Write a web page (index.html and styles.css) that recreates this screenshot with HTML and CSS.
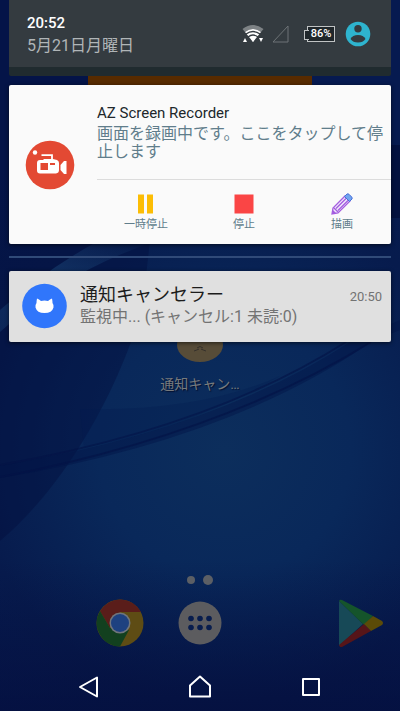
FILE: index.html
```html
<!DOCTYPE html>
<html lang="ja">
<head>
    <meta charset="UTF-8">
    <meta name="viewport" content="width=device-width, initial-scale=1.0">
    <title>通知</title>
    <link rel="stylesheet" href="styles.css">
</head>
<body>
    <div class="screen">
        <svg class="wallpaper" viewBox="0 0 400 711" preserveAspectRatio="none" aria-hidden="true">
            <defs>
                <radialGradient id="glow" gradientUnits="userSpaceOnUse" cx="225" cy="450" r="360">
                    <stop offset="0" stop-color="#0c2e5c"/>
                    <stop offset="0.35" stop-color="#09285a"/>
                    <stop offset="0.7" stop-color="#071b4d"/>
                    <stop offset="1" stop-color="#061a50"/>
                </radialGradient>
                <linearGradient id="floor" x1="0" y1="0" x2="0" y2="1">
                    <stop offset="0" stop-color="#040d3c" stop-opacity="0"/>
                    <stop offset="1" stop-color="#040d3c" stop-opacity="0.7"/>
                </linearGradient>
                <linearGradient id="streak" x1="0" y1="1" x2="1" y2="0">
                    <stop offset="0" stop-color="#1c4a7c" stop-opacity="0.35"/>
                    <stop offset="0.5" stop-color="#1c4a7c" stop-opacity="0.5"/>
                    <stop offset="1" stop-color="#1c4a7c" stop-opacity="0"/>
                </linearGradient>
            </defs>
            <rect width="400" height="711" fill="url(#glow)"/>
            <rect y="560" width="400" height="151" fill="url(#floor)"/>
            <path d="M0 0H150C160 180 150 290 131 342C105 412 60 490 0 541Z" fill="#020d3c" opacity="0.4"/>
            <path d="M0 310Q45 270 100 240H160Q70 268 0 332Z" fill="url(#streak)"/>
            <path d="M391 145H400V218H391Z" fill="#020b36" opacity="0.6"/>
            <path d="M0 466Q215 430 350 342L400 320V330L371 342Q230 440 0 478Z" fill="#031448" opacity="0.45"/>
            <path d="M0 465Q210 428 346 342M0 477Q220 435 371 342" fill="none" stroke="#031246" stroke-width="2" opacity="0.6"/>
            <path d="M80 409Q200 412 280 376Q200 424 84 448Z" fill="#041a50" opacity="0.3"/>
        </svg>

        <!-- Home screen, dimmed behind the shade -->
        <main class="home">
            <div class="widget"></div>
            <a class="app" href="#">
                <svg width="48" height="48" viewBox="0 0 48 48" aria-hidden="true">
                    <ellipse cx="24" cy="31" rx="23" ry="17" fill="#574c38"/>
                    <path d="M21 34q3-3 6 0M18 37q3-1 5-2M30 37q-3-1-5-2" fill="none" stroke="#35302b"/>
                </svg>
                <span>通知キャン…</span>
            </a>
            <div class="pages"><i class="dot"></i><i class="dot current"></i></div>
            <div class="dock">
                <a class="dock-chrome" href="#" aria-label="Chrome">
                    <svg width="48" height="48" viewBox="0 0 48 48">
                        <circle cx="24" cy="24" r="23.500" fill="#5e4c14"/>
                        <path d="M4 12A23.500 23.500 0 0 1 45 13H24L14 29Z" fill="#5a1d1a"/>
                        <path d="M4 12A23.500 23.500 0 0 0 24 47.500L33 31L14 29Z" fill="#12401f"/>
                        <circle cx="24" cy="24" r="10.500" fill="#70757c"/>
                        <circle cx="24" cy="24" r="9" fill="#1e4180"/>
                    </svg>
                </a>
                <a class="dock-apps" href="#" aria-label="アプリ">
                    <svg width="48" height="48" viewBox="0 0 48 48">
                        <circle cx="24" cy="24" r="21.500" fill="#5c5c5f"/>
                        <g fill="#081d4e">
                            <circle cx="15" cy="19.500" r="2.800"/><circle cx="24" cy="19.500" r="2.800"/><circle cx="33" cy="19.500" r="2.800"/>
                            <circle cx="15" cy="28.500" r="2.800"/><circle cx="24" cy="28.500" r="2.800"/><circle cx="33" cy="28.500" r="2.800"/>
                        </g>
                    </svg>
                </a>
                <a class="dock-play" href="#" aria-label="Play ストア">
                    <svg width="48" height="48" viewBox="0 0 48 48">
                        <path d="M3 2V47L27 25Z" fill="#174957"/>
                        <path d="M3 2Q4 0 6 1L37 17L28 26Z" fill="#15542b"/>
                        <path d="M28 25L3 46Q4 49 6 48L35 32Z" fill="#561519"/>
                        <path d="M37 17L46 22Q48 24 46 26L35 32L28 25Z" fill="#5b4b08"/>
                    </svg>
                </a>
            </div>
        </main>

        <!-- Notification shade -->
        <div class="shade">
            <header class="status">
                <div class="clock">
                    <div class="time">20:52</div>
                    <div class="date">5月21日月曜日</div>
                </div>
                <div class="status-icons">
                    <svg width="22" height="20" viewBox="0 0 22 20" aria-label="Wi-Fi">
                        <path d="M0.500 5Q11-3 21.500 5L19 8Q11 2 3 8Z" fill="#7d8285"/>
                        <path d="M3 8Q11 2 19 8L11 18Z" fill="#fff"/>
                        <path d="M4 10Q11 5 18 10M6 13Q11 9 16 13" fill="none" stroke="#343b40" stroke-width="1.300"/>
                        <path d="M1 18L3 14L5 18ZM17 14H21L19 18ZM9 14H13L11 18Z" fill="#fff"/>
                    </svg>
                    <svg width="17" height="18" viewBox="0 0 17 18" aria-label="圏外">
                        <path d="M1 17H16V1Z" fill="none" stroke="#6d7376"/>
                    </svg>
                    <div class="battery">86%</div>
                    <svg class="user" width="26" height="26" viewBox="0 0 26 26" aria-label="ユーザー">
                        <circle cx="13" cy="13" r="12.300" fill="#2eb4cf"/>
                        <circle cx="13" cy="7.700" r="3.700" fill="#343b40"/>
                        <path d="M5.500 18Q7.500 14 13 14T20.500 18Q18 21.500 13 21.500T5.500 18Z" fill="#343b40"/>
                    </svg>
                </div>
            </header>

            <section class="card recorder">
                <svg class="card-icon" width="50" height="50" viewBox="0 0 50 50" aria-hidden="true">
                    <circle cx="25" cy="25" r="24.300" fill="#e34933"/>
                    <circle cx="10" cy="12.500" r="2.200" fill="#fff"/>
                    <path d="M16.500 15.200H27V20" fill="none" stroke="#fff" stroke-width="1.800"/>
                    <path d="M15 20H18L19 19H28L32 20Q34 21 34 23V30Q34 33 31 33.500H15Q12 33.500 12 30.500V23Q12 20 15 20Z" fill="#fff"/>
                    <rect x="15.500" y="23" width="7.500" height="7" fill="#e34933"/>
                    <rect x="25" y="23" width="5" height="2" fill="#e34933"/>
                    <path d="M35.500 25L39 21H41.500V34H39L35.500 30Z" fill="#fff"/>
                </svg>
                <div class="recorder-body">
                    <h2>AZ Screen Recorder</h2>
                    <p>画面を録画中です。ここをタップして停止します</p>
                    <div class="actions">
                        <button type="button">
                            <svg width="22" height="22" viewBox="0 0 22 22"><path d="M3 1.500H9V20.500H3ZM12 1.500H18V20.500H12Z" fill="#fcbd05"/></svg>
                            一時停止
                        </button>
                        <button type="button">
                            <svg width="22" height="22" viewBox="0 0 22 22"><rect x="1.500" y="1.500" width="19" height="19" fill="#fa4545"/></svg>
                            停止
                        </button>
                        <button type="button">
                            <svg width="22" height="22" viewBox="0 0 22 22">
                                <g fill="none" stroke="#a45ddf" stroke-width="1.300">
                                    <path d="M1 21L2 15L14 3L19 8L7 20Z" fill="#f0e8fb"/>
                                    <path d="M3 15L7 19M5 15.500L15.500 5M7 17.500L17.500 7"/>
                                </g>
                                <path d="M1 21L2 17L5 20Z" fill="#a45ddf"/>
                                <path d="M13.500 3.500L16 1Q17 .5 18 1.300L20.700 4Q21.500 5 21 6L18.500 8.500Z" fill="#71a5ee" stroke="#486fd9"/>
                            </svg>
                            描画
                        </button>
                    </div>
                </div>
            </section>

            <hr class="divider">

            <section class="card canceller">
                <svg width="46" height="46" viewBox="0 0 46 46" aria-hidden="true">
                    <circle cx="23.500" cy="23" r="22.300" fill="#3076fb"/>
                    <path d="M16 15.500Q18 16 20 18Q23.500 17 27 18Q29 16 31 15.500Q31.500 18 31.500 20Q33 22 32.500 24.500Q31 30 23.500 30T14.500 24.500Q14 22 15.500 20Q15.500 18 16 15.500Z" fill="#fff"/>
                </svg>
                <div class="canceller-body">
                    <h2>通知キャンセラー</h2>
                    <p>監視中... (キャンセル:1 未読:0)</p>
                </div>
                <time>20:50</time>
            </section>
        </div>

        <nav class="navbar">
            <button type="button" aria-label="戻る">
                <svg width="24" height="24" viewBox="0 0 24 24"><path d="M20 2.500V21.500L3 12Z"/></svg>
            </button>
            <button type="button" aria-label="ホーム">
                <svg width="24" height="24" viewBox="0 0 24 24"><path d="M2 21.500V10.500L12 1.500L22 10.500V21.500Z"/></svg>
            </button>
            <button type="button" aria-label="履歴">
                <svg width="24" height="24" viewBox="0 0 24 24"><path d="M4 4H20V20H4Z"/></svg>
            </button>
        </nav>
    </div>
</body>
</html>
```

FILE: styles.css
```css
* {
    margin: 0;
    padding: 0;
    box-sizing: border-box;
}

body {
    font-family: Roboto, "Noto Sans CJK JP", sans-serif;
    background: #051246;
}

svg {
    display: block;
    flex-shrink: 0;
}

button {
    background: none;
    border: none;
    font: inherit;
    color: inherit;
    cursor: pointer;
}

a {
    color: inherit;
    text-decoration: none;
}

h2 {
    font-weight: 400;
}

/* home and shade share the first row */
.screen {
    position: relative;
    display: grid;
    grid-template: 1fr 48px / 1fr;
    min-height: 100vh;
}

.wallpaper {
    position: absolute;
    width: 100%;
    height: 100%;
}

.home,
.shade {
    grid-area: 1 / 1;
    position: relative;
    min-width: 0;
}

/* Home screen */
.home {
    display: flex;
    flex-direction: column;
    align-items: center;
    padding: 60px 0 16px;
}

.widget {
    width: 56%;
    height: 40px;
    background: #572b00;
}

.app {
    display: flex;
    flex-direction: column;
    align-items: center;
    gap: 12px;
    margin-top: 214px;
    font-size: 14px;
    line-height: 20px;
    color: #777a7c;
    text-shadow: 1px 1px 1px #031030;
}

.pages {
    display: flex;
    align-items: center;
    gap: 8px;
    margin-top: auto;
    padding-bottom: 14px;
}

.dot {
    width: 8px;
    height: 8px;
    border-radius: 50%;
    background: #5c5f65;
}

.dot.current {
    width: 10px;
    height: 10px;
}

.dock {
    display: grid;
    grid-template-columns: repeat(5, 1fr);
    justify-items: center;
    width: 100%;
}

.dock-chrome {
    grid-column: 2;
}

.dock-apps {
    grid-column: 3;
}

.dock-play {
    grid-column: 5;
}

/* Notification shade */
.shade {
    padding: 0 9px;
}

.status {
    display: flex;
    justify-content: space-between;
    height: 76px;
    padding: 12px 20px 0 18px;
    background: #343b40;
    border-bottom: 9px solid #202b2f;
    border-radius: 0 0 2px 2px;
    margin-bottom: 9px;
}

.time {
    font-size: 15px;
    font-weight: 500;
    line-height: 22px;
    color: #fff;
}

.date {
    font-size: 16px;
    line-height: 24px;
    color: #b0b5b7;
}

.status-icons {
    display: flex;
    align-items: center;
    gap: 8px;
    height: 43px;
}

.battery {
    position: relative;
    width: 28px;
    height: 16px;
    margin-left: 10px;
    border: 1px solid #c0c3c4;
    background: #20272b;
    color: #fff;
    font-size: 11px;
    font-weight: 500;
    line-height: 14px;
    text-align: center;
}

.battery::before {
    content: "";
    position: absolute;
    left: -4px;
    top: 3px;
    width: 4px;
    height: 8px;
    border: 1px solid #c0c3c4;
    border-right: none;
    background: #20272b;
}

.user {
    margin-left: 2px;
}

.card {
    display: flex;
    border-radius: 2px;
    box-shadow: 0 1px 4px rgba(0, 0, 0, 0.6);
}

.recorder {
    height: 159px;
    background: #fafafa;
}

.card-icon {
    align-self: center;
    margin: 0 22px 0 16px;
}

.recorder-body {
    flex: 1;
    padding-top: 18px;
}

.recorder h2 {
    font-size: 15px;
    line-height: 20px;
    color: #20272b;
}

.recorder p {
    height: 56px;
    padding-top: 2px;
    font-size: 16px;
    line-height: 18px;
    color: #607d8b;
}

.actions {
    display: grid;
    grid-template-columns: repeat(3, 1fr);
    border-top: 1px solid #dcdcdc;
}

.actions button {
    display: flex;
    flex-direction: column;
    align-items: center;
    gap: 2px;
    padding-top: 13px;
    font-size: 11px;
    line-height: 16px;
    color: #607d8b;
}

.divider {
    height: 2px;
    margin: 12px 0 13px;
    border: none;
    background: #304a78;
}

.canceller {
    height: 71px;
    padding: 12px 9px 0 12px;
    background: #e0e0e0;
}

.canceller-body {
    flex: 1;
    padding-left: 13px;
}

.canceller h2 {
    font-size: 18px;
    line-height: 24px;
    color: #1c1c1c;
}

.canceller p {
    font-size: 16px;
    line-height: 20px;
    color: #737373;
    white-space: nowrap;
}

.canceller time {
    font-size: 13px;
    line-height: 28px;
    color: #737373;
}

/* Navigation bar */
.navbar {
    position: relative;
    display: flex;
    align-items: center;
    justify-content: center;
    gap: 87px;
}

.navbar path {
    fill: none;
    stroke: #fff;
    stroke-width: 2;
    stroke-linejoin: round;
}
```
